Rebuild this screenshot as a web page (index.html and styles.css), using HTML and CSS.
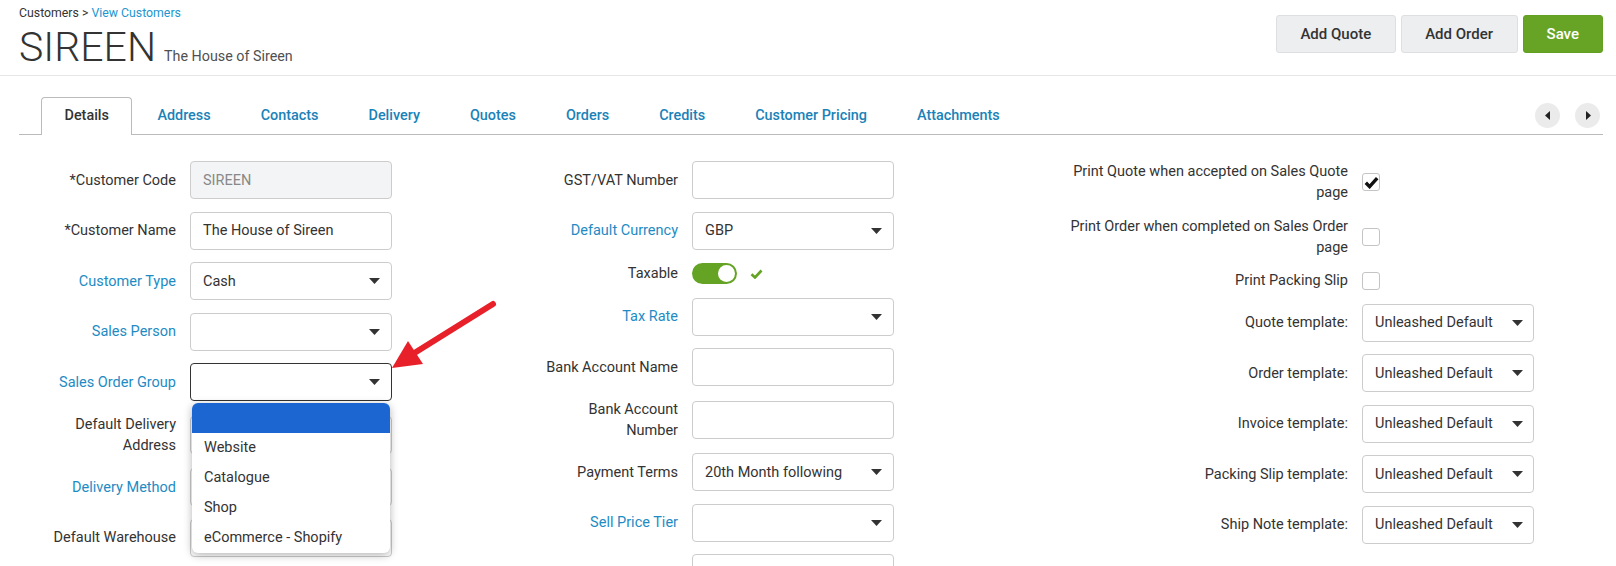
FILE: index.html
```html
<!DOCTYPE html>
<html>
<head>
    <title>SIREEN - Customers</title>
    <link rel="stylesheet" href="styles.css">
</head>
<body>
    <header class="page-head">
        <div class="title-block">
            <div class="crumbs">Customers &gt; <a href="#">View Customers</a></div>
            <h1 class="title">SIREEN<small>The House of Sireen</small></h1>
        </div>
        <div class="actions">
            <button class="btn">Add Quote</button>
            <button class="btn">Add Order</button>
            <button class="btn btn-save">Save</button>
        </div>
    </header>

    <ul class="tabs">
        <li class="active"><a href="#">Details</a></li>
        <li><a href="#">Address</a></li>
        <li><a href="#">Contacts</a></li>
        <li><a href="#">Delivery</a></li>
        <li><a href="#">Quotes</a></li>
        <li><a href="#">Orders</a></li>
        <li><a href="#">Credits</a></li>
        <li><a href="#">Customer Pricing</a></li>
        <li><a href="#">Attachments</a></li>
        <li class="tab-scroll">
            <span class="circle"><svg width="6" height="9" viewBox="0 0 6 9"><polygon points="5,0 5,9 0,4.5" fill="#222"/></svg></span>
            <span class="circle"><svg width="6" height="9" viewBox="0 0 6 9"><polygon points="1,0 1,9 6,4.5" fill="#222"/></svg></span>
        </li>
    </ul>

    <div class="form">
        <!-- left column -->
        <div class="col col-1">
            <div class="row">
                <label>*Customer Code</label>
                <div class="ctl disabled">SIREEN</div>
            </div>
            <div class="row">
                <label>*Customer Name</label>
                <div class="ctl">The House of Sireen</div>
            </div>
            <div class="row">
                <label class="link">Customer Type</label>
                <div class="ctl select"><span>Cash</span><svg class="caret" width="11" height="6" viewBox="0 0 11 6"><polygon points="0,0 11,0 5.5,6" fill="#333"/></svg></div>
            </div>
            <div class="row">
                <label class="link">Sales Person</label>
                <div class="ctl select"><span></span><svg class="caret" width="11" height="6" viewBox="0 0 11 6"><polygon points="0,0 11,0 5.5,6" fill="#333"/></svg></div>
            </div>
            <div class="row">
                <label class="link">Sales Order Group</label>
                <div class="ctl select focus"><span></span><svg class="caret" width="11" height="6" viewBox="0 0 11 6"><polygon points="0,0 11,0 5.5,6" fill="#333"/></svg>
                    <ul class="dropdown">
                        <li class="sel"></li>
                        <li>Website</li>
                        <li>Catalogue</li>
                        <li>Shop</li>
                        <li>eCommerce - Shopify</li>
                    </ul>
                </div>
            </div>
            <div class="row">
                <label>Default Delivery Address</label>
                <div class="ctl select"><span></span></div>
            </div>
            <div class="row">
                <label class="link">Delivery Method</label>
                <div class="ctl select"><span></span></div>
            </div>
            <div class="row">
                <label>Default Warehouse</label>
                <div class="ctl select"><span></span></div>
            </div>
        </div>

        <!-- middle column -->
        <div class="col col-2">
            <div class="row">
                <label>GST/VAT Number</label>
                <div class="ctl"></div>
            </div>
            <div class="row">
                <label class="link">Default Currency</label>
                <div class="ctl select"><span>GBP</span><svg class="caret" width="11" height="6" viewBox="0 0 11 6"><polygon points="0,0 11,0 5.5,6" fill="#333"/></svg></div>
            </div>
            <div class="row row-toggle">
                <label>Taxable</label>
                <span class="toggle"><span class="knob"></span></span>
                <svg class="tick" width="13" height="10" viewBox="0 0 13 10"><path d="M1.5 5.2 L5 8.5 L11.5 1.5" fill="none" stroke="#65a324" stroke-width="2.6"/></svg>
            </div>
            <div class="row">
                <label class="link">Tax Rate</label>
                <div class="ctl select"><span></span><svg class="caret" width="11" height="6" viewBox="0 0 11 6"><polygon points="0,0 11,0 5.5,6" fill="#333"/></svg></div>
            </div>
            <div class="row">
                <label>Bank Account Name</label>
                <div class="ctl"></div>
            </div>
            <div class="row">
                <label>Bank Account Number</label>
                <div class="ctl"></div>
            </div>
            <div class="row">
                <label>Payment Terms</label>
                <div class="ctl select"><span>20th Month following</span><svg class="caret" width="11" height="6" viewBox="0 0 11 6"><polygon points="0,0 11,0 5.5,6" fill="#333"/></svg></div>
            </div>
            <div class="row">
                <label class="link">Sell Price Tier</label>
                <div class="ctl select"><span></span><svg class="caret" width="11" height="6" viewBox="0 0 11 6"><polygon points="0,0 11,0 5.5,6" fill="#333"/></svg></div>
            </div>
            <div class="row">
                <label></label>
                <div class="ctl"></div>
            </div>
        </div>

        <!-- right column -->
        <div class="col col-3">
            <div class="row row-check">
                <label>Print Quote when accepted on Sales Quote page</label>
                <span class="check checked"><svg width="15" height="13" viewBox="0 0 15 13"><path d="M1.8 6.8 L5.6 10.6 L13.2 2.2" fill="none" stroke="#111" stroke-width="3.4"/></svg></span>
            </div>
            <div class="row row-check">
                <label>Print Order when completed on Sales Order page</label>
                <span class="check"></span>
            </div>
            <div class="row row-check">
                <label>Print Packing Slip</label>
                <span class="check"></span>
            </div>
            <div class="row">
                <label>Quote template:</label>
                <div class="ctl select small"><span>Unleashed Default</span><svg class="caret" width="11" height="6" viewBox="0 0 11 6"><polygon points="0,0 11,0 5.5,6" fill="#333"/></svg></div>
            </div>
            <div class="row">
                <label>Order template:</label>
                <div class="ctl select small"><span>Unleashed Default</span><svg class="caret" width="11" height="6" viewBox="0 0 11 6"><polygon points="0,0 11,0 5.5,6" fill="#333"/></svg></div>
            </div>
            <div class="row">
                <label>Invoice template:</label>
                <div class="ctl select small"><span>Unleashed Default</span><svg class="caret" width="11" height="6" viewBox="0 0 11 6"><polygon points="0,0 11,0 5.5,6" fill="#333"/></svg></div>
            </div>
            <div class="row">
                <label>Packing Slip template:</label>
                <div class="ctl select small"><span>Unleashed Default</span><svg class="caret" width="11" height="6" viewBox="0 0 11 6"><polygon points="0,0 11,0 5.5,6" fill="#333"/></svg></div>
            </div>
            <div class="row">
                <label>Ship Note template:</label>
                <div class="ctl select small"><span>Unleashed Default</span><svg class="caret" width="11" height="6" viewBox="0 0 11 6"><polygon points="0,0 11,0 5.5,6" fill="#333"/></svg></div>
            </div>
        </div>
    </div>

    <!-- red pointer drawn over the screenshot -->
    <svg class="pointer" width="130" height="90" viewBox="0 0 130 90">
        <line x1="113" y1="14" x2="36" y2="62" stroke="#e8202a" stroke-width="6" stroke-linecap="round"/>
        <polygon points="12,78 43,74 28,51" fill="#e8202a"/>
    </svg>
</body>
</html>
```

FILE: styles.css
```css
body {
    margin: 0;
    font-family: Roboto, "Liberation Sans", sans-serif;
    color: #333;
    background: #fff;
}

/* header */
.page-head {
    display: flex;
    justify-content: space-between;
    align-items: flex-start;
    height: 75px;
    padding: 0 13px 0 19px;
    border-bottom: 1px solid #e6e6e6;
}
.crumbs {
    font-size: 12.3px;
    line-height: 16px;
    margin-top: 5px;
}
.crumbs a {
    color: #2196d0;
    text-decoration: none;
}
.title {
    margin: 5px 0 0;
    font-size: 41px;
    font-weight: 300;
    line-height: 42px;
    color: #333;
}
.title small {
    margin-left: 8px;
    font-size: 14.3px;
    font-weight: 400;
    color: #505050;
}
.actions {
    display: flex;
    gap: 5px;
    margin-top: 15px;
}
.btn {
    height: 38px;
    padding: 0 23.5px;
    border: 1px solid #dddfe1;
    border-radius: 3px;
    background: #eceef0;
    font-family: Roboto, sans-serif;
    font-size: 15px;
    font-weight: 500;
    color: #333;
}
.btn-save {
    padding: 0 23px;
    background: #67a426;
    border-color: #61a020;
    color: #fff;
}

/* tabs */
.tabs {
    display: flex;
    list-style: none;
    margin: 21px 13px 0 19px;
    padding: 0 3px 0 22px;
    border-bottom: 1px solid #bbb;
}
.tabs li a {
    display: block;
    padding: 0 24px;
    line-height: 36px;
    border: 1px solid transparent;
    border-bottom: 0;
    font-size: 14.4px;
    font-weight: 500;
    color: #1a82b8;
    text-decoration: none;
}
.tabs li.active {
    margin-bottom: -1px;
}
.tabs li.active a {
    padding: 0 22.5px 1px;
    border-color: #bbb;
    border-radius: 4px 4px 0 0;
    background: #fff;
    color: #333;
}
.tab-scroll {
    margin-left: auto;
    display: flex;
    align-items: center;
    gap: 15px;
    height: 37px;
}
.circle {
    width: 25px;
    height: 25px;
    border-radius: 50%;
    background: #ebebeb;
    display: flex;
    align-items: center;
    justify-content: center;
}

/* form */
.form {
    display: grid;
    grid-template-columns: 520px 519px 1fr;
    padding: 26px 0 0 19px;
}
.col-1 {
    padding-left: 22px;
}
.row {
    display: flex;
    align-items: center;
    gap: 14px;
    min-height: 38px;
    margin-bottom: 12.5px;
}
.row label {
    flex: 0 0 135px;
    text-align: right;
    font-size: 14.5px;
    line-height: 21px;
    color: #333;
}
.col-2 .row label {
    flex-basis: 139px;
}
.col-3 .row label {
    flex-basis: 290px;
}
.row label.link {
    color: #1e8bc4;
}
.row-toggle {
    min-height: 23px;
}
.row-check {
    min-height: 21px;
}

.ctl {
    position: relative;
    box-sizing: border-box;
    width: 202px;
    height: 38px;
    padding: 0 11px 0 12px;
    border: 1px solid #ccc;
    border-radius: 4px;
    display: flex;
    align-items: center;
    justify-content: space-between;
    font-size: 14.5px;
    color: #333;
    background: #fff;
}
.ctl.small {
    width: 172px;
    padding-right: 10px;
}
.ctl.disabled {
    background: #f3f4f6;
    color: #888;
}
.ctl.focus {
    border-color: #333;
}

.dropdown {
    position: absolute;
    top: calc(100% + 3px);
    left: 1px;
    width: 198px;
    margin: 0;
    padding: 0;
    list-style: none;
    background: #fff;
    border-radius: 6px;
    overflow: hidden;
    box-shadow: 0 2px 9px rgba(0, 0, 0, 0.3);
    z-index: 2;
}
.dropdown li {
    height: 30px;
    line-height: 30px;
    padding-left: 12px;
    font-size: 14.5px;
}
.dropdown li.sel {
    background: #1b66d1;
}

.toggle {
    position: relative;
    width: 45px;
    height: 21px;
    border-radius: 11px;
    background: #65a324;
}
.knob {
    position: absolute;
    right: 2px;
    top: 2px;
    width: 17px;
    height: 17px;
    border-radius: 50%;
    background: #fff;
}
.tick {
    margin-left: -1px;
}

.check {
    box-sizing: border-box;
    width: 18px;
    height: 18px;
    border: 1px solid #c4c4c4;
    border-radius: 3px;
    display: flex;
    align-items: center;
    justify-content: center;
}

.pointer {
    position: absolute;
    left: 380px;
    top: 290px;
    z-index: 3;
}
```
